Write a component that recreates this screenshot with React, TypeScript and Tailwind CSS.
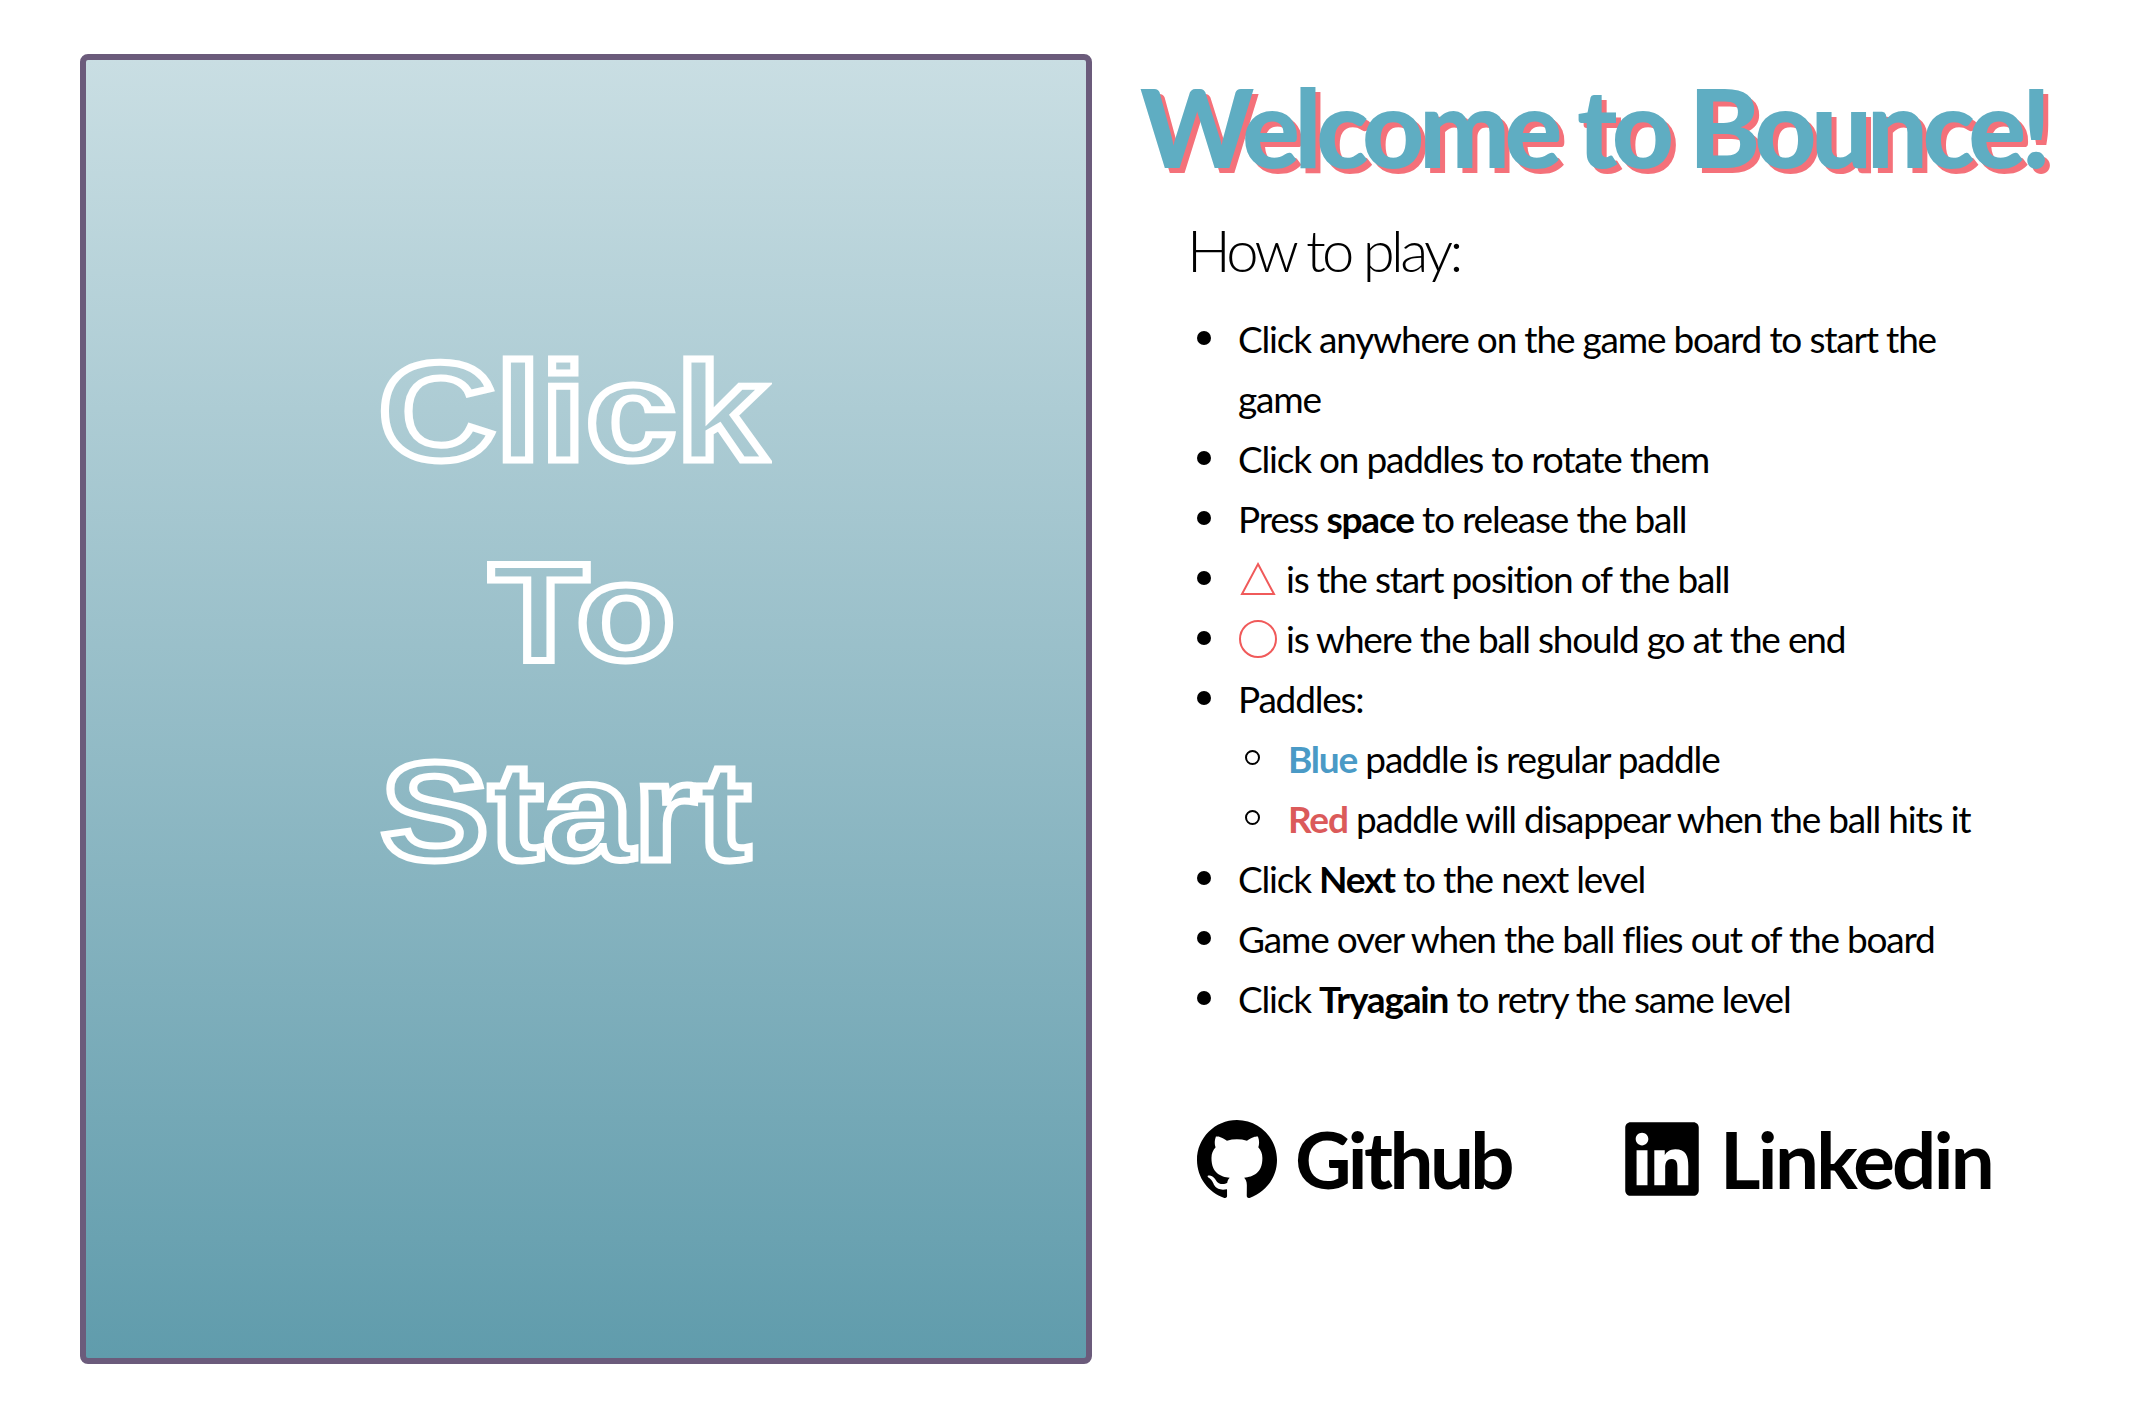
import { FaLinkedin } from "react-icons/fa";
import { SiGithub } from "react-icons/si";

const startLines = [
  { text: "Click", className: "mr-[28px]" },
  { text: "To", className: "mr-[8px]" },
  { text: "Start", className: "mr-[42px]" },
];

const bullet =
  "relative before:absolute before:top-[22px] before:left-[-41px] before:size-[14px] before:rounded-full before:bg-black before:content-['']";
const ring =
  "relative before:absolute before:top-[21px] before:left-[-43px] before:size-[15px] before:rounded-full before:border-2 before:border-black before:content-['']";

const App = () => {
  return (
    <div className="flex min-h-[1420px] w-[2132px] items-start gap-[48px] bg-white pl-[80px] pt-[54px] font-['Lato',sans-serif] text-black">
      <div className="flex h-[1310px] w-[1012px] shrink-0 flex-col items-center rounded-[8px] border-[6px] border-[#6b5b7b] bg-gradient-to-b from-[#c9dee3] to-[#609cac] pt-[272px]">
        {startLines.map((line) => (
          <div
            key={line.text}
            className={`h-[200px] scale-x-[1.16] font-['Liberation_Sans'] text-[140px] leading-[160px] font-bold text-transparent [-webkit-text-stroke:7px_#ffffff] ${line.className}`}
          >
            {line.text}
          </div>
        ))}
      </div>

      <div className="w-[930px] shrink-0">
        <h1 className="mt-[12px] text-[108px] leading-[120px] font-black tracking-[-5.5px] whitespace-nowrap text-[#5fadc2] [text-shadow:5px_5px_0_#f4717a]">
          Welcome to Bounce!
        </h1>
        <h2 className="mt-[24px] ml-[47px] text-[58px] leading-[80px] font-light tracking-[-3.7px]">How to play:</h2>
        <ul className="mt-[19px] ml-[48px] w-[800px] list-none pl-[50px] text-[37px] leading-[60px] tracking-[-1.2px]">
          <li className={bullet}>Click anywhere on the game board to start the game</li>
          <li className={bullet}>Click on paddles to rotate them</li>
          <li className={bullet}>
            Press <b>space</b> to release the ball
          </li>
          <li className={bullet}>
            <svg viewBox="0 0 36 36" className="mr-[10px] ml-[2px] inline-block size-[36px] align-[-4px]">
              <path d="M18 3 L34 33 H2 Z" fill="none" stroke="#f05a5a" strokeWidth="2" />
            </svg>
            is the start position of the ball
          </li>
          <li className={bullet}>
            <svg viewBox="0 0 38 38" className="mr-[9px] ml-[1px] inline-block size-[38px] align-[-5px]">
              <circle cx="19" cy="19" r="18" fill="none" stroke="#f05a5a" strokeWidth="2" />
            </svg>
            is where the ball should go at the end
          </li>
          <li className={bullet}>
            Paddles:
            <ul className="list-none pl-[50px]">
              <li className={ring}>
                <b className="text-[#4a9ac6]">Blue</b> paddle is regular paddle
              </li>
              <li className={ring}>
                <b className="text-[#db5a5a]">Red</b> paddle will disappear when the ball hits it
              </li>
            </ul>
          </li>
          <li className={bullet}>
            Click <b>Next</b> to the next level
          </li>
          <li className={bullet}>Game over when the ball flies out of the board</li>
          <li className={bullet}>
            Click <b>Tryagain</b> to retry the same level
          </li>
        </ul>
        <div className="mt-[80px] ml-[57px] flex items-center gap-[109px] text-[78px] leading-[100px] font-bold">
          <a className="flex items-center gap-[18px] tracking-[-3.6px]">
            <SiGithub className="size-[80px]" />
            Github
          </a>
          <a className="flex items-center gap-[16px] tracking-[-2.7px]">
            <FaLinkedin className="size-[84px]" />
            Linkedin
          </a>
        </div>
      </div>
    </div>
  );
};

export default App;
